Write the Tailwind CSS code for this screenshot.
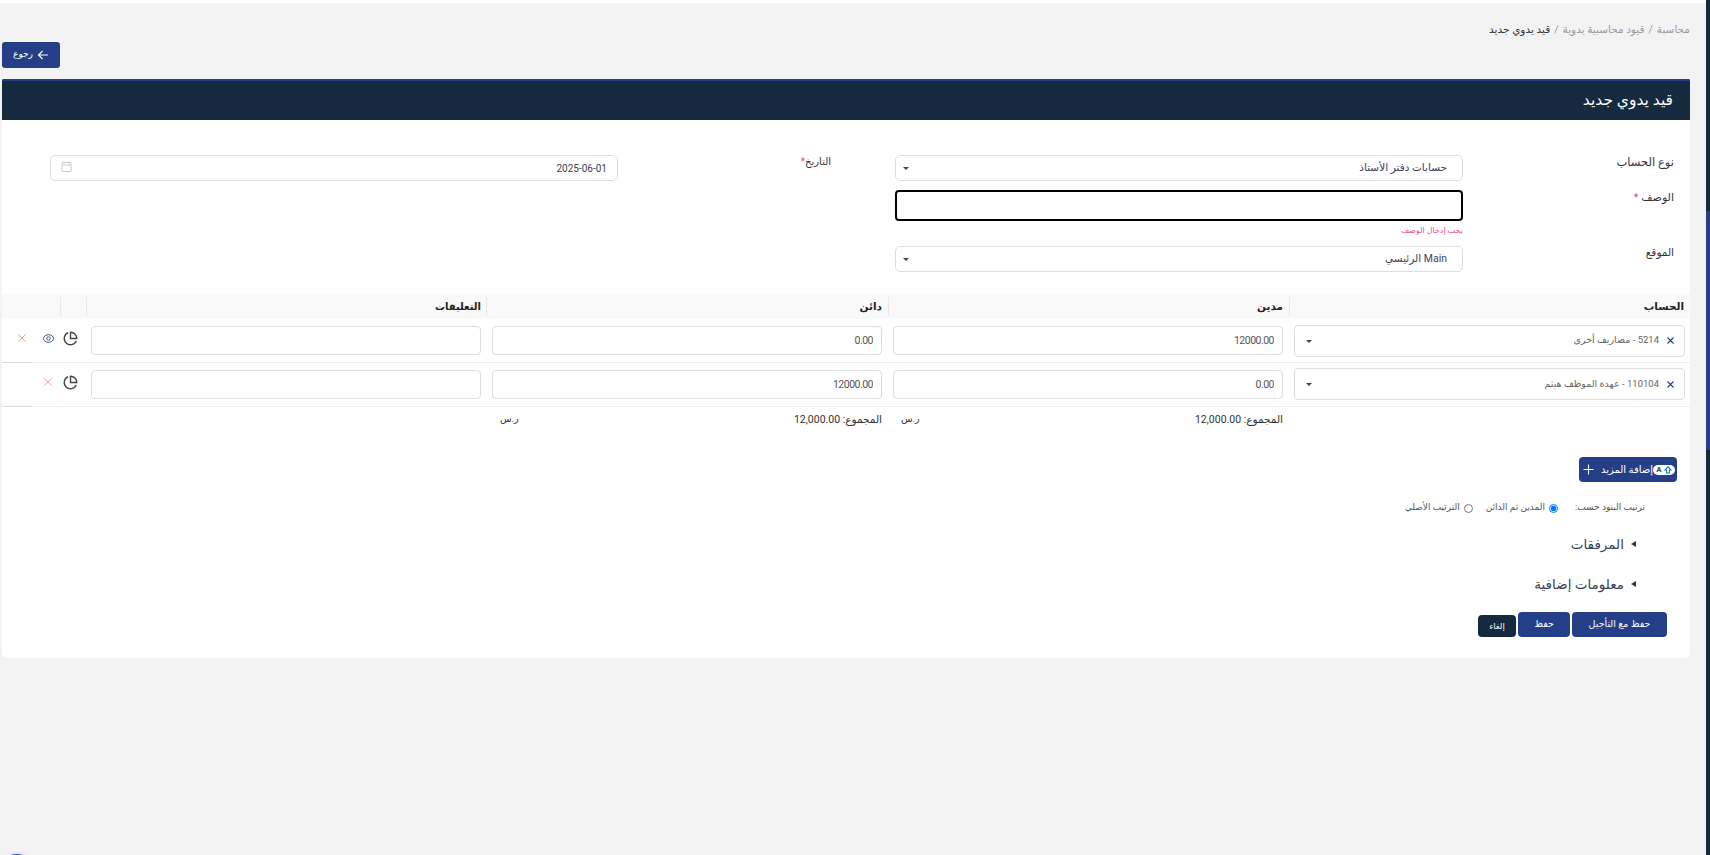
<!doctype html>
<html dir="rtl" lang="ar">
<head>
<meta charset="utf-8">
<title>قيد يدوي جديد</title>
<script src="https://cdn.jsdelivr.net/npm/@tailwindcss/browser@4"></script>
</head>
<body class="bg-[#f3f3f3] h-[855px] w-[1710px] overflow-hidden font-['Roboto','DejaVu_Sans',sans-serif] text-[#3b3f55]">
<div class="relative h-[855px] w-[1710px] overflow-hidden">
  <div class="h-[3px] bg-white"></div>
  <!-- edge of the sidebar -->
  <div class="absolute right-0 top-0 w-1 h-full flex flex-col">
    <div class="h-[211px] bg-[#152a3e]"></div>
    <div class="h-[239px] bg-[#243f87]"></div>
    <div class="flex-1 bg-[#152a3e]"></div>
  </div>
  <!-- floating button peeking in at the bottom -->
  <div class="absolute left-[-1px] top-[854px] w-9 h-9 rounded-full bg-[#3f51b5] shadow-[0_0_3px_rgba(63,81,181,0.25)]"></div>

  <div class="mr-[20px] ml-[2px]">
    <nav class="h-[20px] mt-[17px] flex items-center text-[10.5px] gap-[4px] text-[#9a9a9a] leading-none">
      <span>محاسبة</span><span>/</span><span>قيود محاسبية يدوية</span><span>/</span><span class="text-[#333]">قيد يدوي جديد</span>
    </nav>
    <div class="h-[39px] pt-[2px] flex justify-end">
      <button class="w-[58px] h-[26px] bg-[#243f87] rounded-[3px] text-white text-[9px] flex items-center justify-center gap-[4px]">
        <svg class="w-[12px] h-[12px]" viewBox="0 0 16 16" fill="none" stroke="currentColor" stroke-width="1.6"><path d="M14.5 8H2M7.5 2.5 2 8l5.5 5.5"/></svg>
        <span>رجوع</span>
      </button>
    </div>

    <section class="bg-white rounded-t-[2px] rounded-b-[6px] h-[579px] overflow-hidden">
      <header class="h-[41px] bg-[#152a3e] border-t-2 border-[#243f87] flex items-center pr-[17px] text-white text-[15.5px]">قيد يدوي جديد</header>

      <!-- form -->
      <div class="pt-[35px] h-[174px] text-[10.5px]">
        <div class="grid grid-cols-[227px_568px_277px_568px] items-start">
          <label class="pr-[16px] leading-[14px] text-[11.5px] text-[#333]">نوع الحساب</label>
          <div class="h-[26px] border border-[#ddd] rounded-[5px] flex items-center justify-between pr-[15px] pl-[7px]">
            <span class="-mt-[1px]">حسابات دفتر الأستاذ</span>
            <span class="w-0 h-0 border-x-[3px] border-x-transparent border-t-[3px] border-t-[#444]"></span>
          </div>
          <label class="pr-[64px] leading-[14px] text-[10px] text-[#333]">التاريخ<span class="text-[#e8467c]">*</span></label>
          <div class="h-[26px] border border-[#ddd] rounded-[5px] flex items-center justify-between pr-[10px] pl-[10px]">
            <span dir="ltr" class="text-[10px]">2025-06-01</span>
            <svg class="w-[11px] h-[11px] -mt-[4px]" viewBox="0 0 11 11" fill="none" stroke="#c9c9c9" stroke-width="1"><rect x="1" y="1.5" width="9" height="9" rx="0.5"/><path d="M1 4h9M3 .5v2M8 .5v2"/></svg>
          </div>
        </div>
        <div class="grid grid-cols-[227px_568px] items-start mt-[9px]">
          <label class="pr-[16px] leading-[14px] pt-[1px] text-[11px] text-[#333]">الوصف <span class="text-[#e8467c]">*</span></label>
          <input class="h-[31px] border-2 border-black rounded-[4px] bg-white" type="text">
        </div>
        <div class="grid grid-cols-[227px_568px] h-[25px] items-start">
          <span></span>
          <p class="text-[8px] leading-[20px] text-[#e8558a]">يجب إدخال الوصف</p>
        </div>
        <div class="grid grid-cols-[227px_568px] items-start">
          <label class="pr-[16px] leading-[14px] text-[#333]">الموقع</label>
          <div class="h-[26px] border border-[#ddd] rounded-[5px] flex items-center justify-between pr-[15px] pl-[7px]">
            <span>Main الرئيسي</span>
            <span class="w-0 h-0 border-x-[3px] border-x-transparent border-t-[3px] border-t-[#444]"></span>
          </div>
        </div>
      </div>

      <!-- table head -->
      <div class="grid grid-cols-[401px_401px_402px_400px_26px_58px] h-[25px] bg-[#f9f9f9] items-center text-[10.5px] font-semibold text-[#222]">
        <div class="h-[19px] border-l border-[#e8e8e8] pr-[6px] leading-[19px]">الحساب</div>
        <div class="h-[19px] border-l border-[#e8e8e8] pr-[6px] leading-[19px]">مدين</div>
        <div class="h-[19px] border-l border-[#e8e8e8] pr-[6px] leading-[19px]">دائن</div>
        <div class="h-[19px] border-l border-[#e8e8e8] pr-[5px] leading-[19px] text-[10px]">التعليقات</div>
        <div class="h-[19px] border-l border-[#e8e8e8]"></div>
        <div></div>
      </div>

      <!-- row 1 -->
      <div class="grid grid-cols-[401px_401px_402px_400px_84px] h-[43px] items-start">
        <div class="pr-[5px] pt-[6px]">
          <div class="w-[391px] h-[32px] border border-[#ddd] rounded-[4px] flex items-center justify-between pr-[10px] pl-[11px] text-[9.5px] text-[#666]">
            <span class="flex items-center gap-[8px]">
              <svg class="w-[7px] h-[7px] -mt-[2px]" viewBox="0 0 7 7" stroke="#243f87" stroke-width="1.1"><path d="M.5.5l6 6M6.5.5l-6 6"/></svg>
              <span class="-mt-[1px]">5214 - مصاريف أخرى</span>
            </span>
            <span class="w-0 h-0 border-x-[3px] border-x-transparent border-t-[3px] border-t-[#444]"></span>
          </div>
        </div>
        <div class="pr-[6px] pt-[7px]"><input value="12000.00" class="w-[390px] h-[29px] border border-[#ddd] rounded-[4px] px-[8px] text-[10.5px] tracking-[-0.5px] text-[#555]"></div>
        <div class="pr-[6px] pt-[7px]"><input value="0.00" class="w-[390px] h-[29px] border border-[#ddd] rounded-[4px] px-[8px] text-[10.5px] tracking-[-0.5px] text-[#555]"></div>
        <div class="pr-[5px] pt-[7px]"><input class="w-[390px] h-[29px] border border-[#ddd] rounded-[4px]"></div>
        <div class="flex items-start pr-[8px] pt-[12px]">
          <svg class="w-[15px] h-[15px] shrink-0" viewBox="0 0 24 24" fill="none" stroke="#444" stroke-width="2.2"><path d="M21.2 15.9A10 10 0 1 1 8 2.8"/><path d="M22 12A10 10 0 0 0 12 2v10z"/></svg>
          <svg class="w-[11px] h-[9px] shrink-0 mr-[9px] mt-[3px]" viewBox="0 0 11 9" fill="none" stroke="#34466f" stroke-width="0.9"><ellipse cx="5.5" cy="4.5" rx="5" ry="3.8"/><circle cx="5.5" cy="4.5" r="1.8"/></svg>
          <svg class="w-[8px] h-[8px] shrink-0 mr-[17px] mt-[3px]" viewBox="0 0 8 8" stroke="#f19a8f" stroke-width="0.9"><path d="M.3.3l7.4 7.4M7.7.3.3 7.7"/></svg>
        </div>
      </div>
      <div class="flex h-px"><div class="flex-1 bg-[#f0f0f0]"></div><div class="w-[30px] bg-[#dcdcdc]"></div></div>

      <!-- row 2 -->
      <div class="grid grid-cols-[401px_401px_402px_400px_84px] h-[43px] items-start">
        <div class="pr-[5px] pt-[5px]">
          <div class="w-[391px] h-[32px] border border-[#ddd] rounded-[4px] flex items-center justify-between pr-[10px] pl-[11px] text-[9.5px] text-[#666]">
            <span class="flex items-center gap-[8px]">
              <svg class="w-[7px] h-[7px]" viewBox="0 0 7 7" stroke="#243f87" stroke-width="1.1"><path d="M.5.5l6 6M6.5.5l-6 6"/></svg>
              <span>110104 - عهدة الموظف هيثم</span>
            </span>
            <span class="w-0 h-0 border-x-[3px] border-x-transparent border-t-[3px] border-t-[#444]"></span>
          </div>
        </div>
        <div class="pr-[6px] pt-[7px]"><input value="0.00" class="w-[390px] h-[29px] border border-[#ddd] rounded-[4px] px-[8px] text-[10.5px] tracking-[-0.5px] text-[#555]"></div>
        <div class="pr-[6px] pt-[7px]"><input value="12000.00" class="w-[390px] h-[29px] border border-[#ddd] rounded-[4px] px-[8px] text-[10.5px] tracking-[-0.5px] text-[#555]"></div>
        <div class="pr-[5px] pt-[7px]"><input class="w-[390px] h-[29px] border border-[#ddd] rounded-[4px]"></div>
        <div class="flex items-start pr-[8px] pt-[12px]">
          <svg class="w-[15px] h-[15px] shrink-0" viewBox="0 0 24 24" fill="none" stroke="#444" stroke-width="2.2"><path d="M21.2 15.9A10 10 0 1 1 8 2.8"/><path d="M22 12A10 10 0 0 0 12 2v10z"/></svg>
          <svg class="w-[8px] h-[8px] shrink-0 mr-[11px] mt-[3px]" viewBox="0 0 8 8" stroke="#f19a8f" stroke-width="0.9"><path d="M.3.3l7.4 7.4M7.7.3.3 7.7"/></svg>
        </div>
      </div>
      <div class="flex h-px"><div class="flex-1 bg-[#f0f0f0]"></div><div class="w-[30px] bg-[#dcdcdc]"></div></div>

      <!-- totals -->
      <div class="grid grid-cols-[401px_401px_402px_484px] h-[50px] text-[10.5px] text-[#333] items-start pt-[5px]">
        <div></div>
        <div class="flex justify-between pr-[6px] pl-[13px]"><span>المجموع: 12,000.00</span><span class="text-[9.5px]">ر.س</span></div>
        <div class="flex justify-between pr-[6px] pl-[14px]"><span>المجموع: 12,000.00</span><span class="text-[9.5px]">ر.س</span></div>
      </div>

      <!-- add more -->
      <div class="h-[25px] pr-[13px] flex">
        <button class="w-[98px] h-[25px] rounded-[4px] bg-[#243f87] text-white text-[10px] flex items-center pr-[2px]">
          <span class="w-[22px] h-[10px] bg-white rounded-full flex items-center justify-center gap-[2px] text-[8px] font-bold text-[#243f87] leading-none">
            <svg class="w-[8px] h-[8px]" viewBox="0 0 8 8" fill="none" stroke="#0a7cc4" stroke-width="1.1"><path d="M4 .8.9 4h1.7v3h2.8V4h1.7z"/></svg>
            <span>A</span>
          </span>
          <span class="whitespace-nowrap">إضافة المزيد</span>
          <svg class="w-[11px] h-[11px] mr-[7px] shrink-0" viewBox="0 0 11 11" stroke="#fff" stroke-width="1.1"><path d="M5.5.5v10M.5 5.5h10"/></svg>
        </button>
      </div>

      <!-- sort -->
      <div class="h-[18px] mt-[17px] pr-[45px] flex items-center text-[9px] text-[#555]">
        <span class="w-[87px]">ترتيب البنود حسب:</span>
        <label class="flex items-center gap-[4px] ml-[13px]"><input type="radio" name="o" checked class="w-[9px] h-[9px] m-0"><span>المدين ثم الدائن</span></label>
        <label class="flex items-center gap-[4px]"><input type="radio" name="o" class="w-[9px] h-[9px] m-0"><span>الترتيب الأصلي</span></label>
      </div>

      <!-- collapsibles -->
      <div class="h-[22px] mt-[16px] pr-[54px] flex items-center gap-[7px] text-[13.5px] text-[#3b3f55]">
        <svg class="w-[5px] h-[6px]" viewBox="0 0 5 6" fill="#333"><path d="M5 0v6L0 3z"/></svg><span>المرفقات</span>
      </div>
      <div class="h-[22px] mt-[18px] pr-[54px] flex items-center gap-[7px] text-[13.5px] text-[#3b3f55]">
        <svg class="w-[5px] h-[6px]" viewBox="0 0 5 6" fill="#333"><path d="M5 0v6L0 3z"/></svg><span>معلومات إضافية</span>
      </div>

      <!-- actions -->
      <div class="mt-[17px] pr-[23px] flex items-end gap-[2px] text-[9.5px] text-white">
        <button class="w-[95px] h-[25px] rounded-[4px] bg-[#243f87]">حفظ مع التأجيل</button>
        <button class="w-[52px] h-[25px] rounded-[4px] bg-[#243f87]">حفظ</button>
        <button class="w-[38px] h-[22px] rounded-[4px] bg-[#152a3e] text-[8.5px]">إلغاء</button>
      </div>
    </section>
  </div>
</div>
</body>
</html>
